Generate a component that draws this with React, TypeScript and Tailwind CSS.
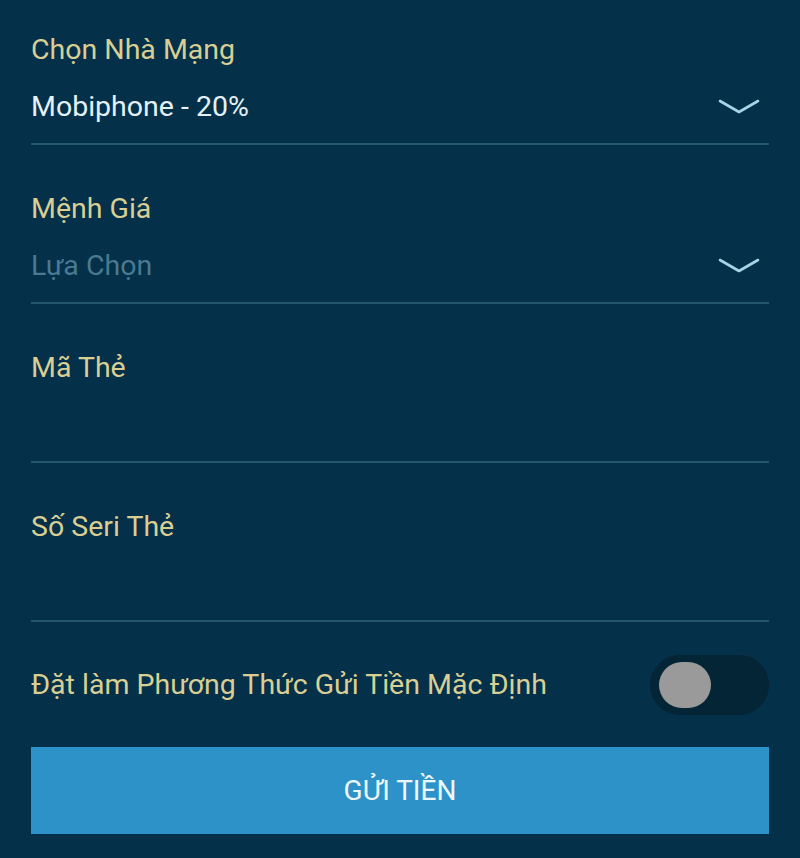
import React, { useState } from "react";

function Chevron() {
  return (
    <svg width="42" height="18" viewBox="0 0 42 18" fill="none" className="shrink-0">
      <path d="M2 3 L21 14 L40 3" stroke="#a9d3e6" strokeWidth="2.6" strokeLinecap="round" strokeLinejoin="round" />
    </svg>
  );
}

interface FieldProps {
  label: string;
  value?: string;
  placeholder?: string;
  select?: boolean;
  first?: boolean;
}

function Field({ label, value, placeholder, select, first }: FieldProps) {
  return (
    <div className={`${first ? "pt-[34px]" : "pt-[48px]"} border-b-2 border-[#24566f]`}>
      <div className="h-[32px] flex items-center text-[28.5px] text-[#d9cf93]">{label}</div>
      <div className="mt-[23px] mb-[18px] h-[36px] flex items-center justify-between">
        {value ? (
          <span className="text-[28.5px] text-[#e4f1f7]">{value}</span>
        ) : (
          <span className="text-[28.5px] text-[#4a7a90]">{placeholder ?? ""}</span>
        )}
        {select && (
          <span className="mr-[9px]">
            <Chevron />
          </span>
        )}
      </div>
    </div>
  );
}

export default function App() {
  const [isDefault, setIsDefault] = useState(false);

  return (
    <div
      className="w-[800px] h-[858px] bg-[#04304a] px-[31px] overflow-hidden"
      style={{ fontFamily: "Roboto, 'Noto Sans', sans-serif" }}
    >
      <Field first label="Chọn Nhà Mạng" value="Mobiphone - 20%" select />
      <Field label="Mệnh Giá" placeholder="Lựa Chọn" select />
      <Field label="Mã Thẻ" />
      <Field label="Số Seri Thẻ" />

      <div className="mt-[33px] h-[60px] flex items-center justify-between">
        <span className="text-[28.5px] text-[#d9cf93]">Đặt làm Phương Thức Gửi Tiền Mặc Định</span>
        <button
          onClick={() => setIsDefault(!isDefault)}
          className="w-[119px] h-[60px] rounded-full bg-[#032536] flex items-center px-[9px]"
        >
          <span className="w-[52px] h-[46px] rounded-full bg-[#9a9a9a]" />
        </button>
      </div>

      <button className="mt-[32px] w-full h-[87px] bg-[#2d92c7] text-[#eef7fb] text-[28px] flex items-center justify-center">
        GỬI TIỀN
      </button>
    </div>
  );
}
